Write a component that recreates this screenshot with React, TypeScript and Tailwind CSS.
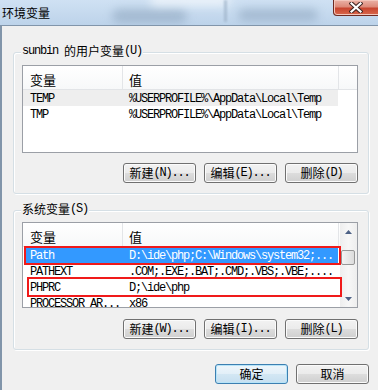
import type { ReactNode } from 'react';

const MONO = "font-['Liberation_Mono',monospace] text-[12px] tracking-[-1.2px]";
const CJK = "font-['Noto_Sans_CJK_SC',sans-serif]";

type RowKind = 'plain' | 'hover' | 'selected';

interface VarRow {
  name: string;
  value: string;
  kind?: RowKind;
}

const USER_VARS: VarRow[] = [
  { name: 'TEMP', value: '%USERPROFILE%\\AppData\\Local\\Temp', kind: 'hover' },
  { name: 'TMP', value: '%USERPROFILE%\\AppData\\Local\\Temp' },
];

const SYSTEM_VARS: VarRow[] = [
  { name: 'Path', value: 'D:\\ide\\php;C:\\Windows\\system32;...', kind: 'selected' },
  { name: 'PATHEXT', value: '.COM;.EXE;.BAT;.CMD;.VBS;.VBE;....' },
  { name: 'PHPRC', value: 'D;\\ide\\php' },
  { name: 'PROCESSOR_AR...', value: 'x86' },
];

function TitleBar() {
  return (
    <div className="relative h-[25px] overflow-hidden bg-gradient-to-b from-[#cfe1f3] to-[#bdd3ea]">
      {/* blurred aero glass behind the caption */}
      <div className="absolute left-[112px] top-[9px] h-[14px] w-[75px] rounded-full bg-[#8ea6bf] opacity-60 blur-[5px]" />
      <div className="absolute left-[150px] top-[-6px] h-[12px] w-[80px] rounded-full bg-white opacity-60 blur-[5px]" />
      <div className="absolute left-[224px] top-[0px] h-[22px] w-[3px] bg-[#9db2c8] opacity-70 blur-[1px]" />
      <div className="absolute left-[238px] top-[9px] h-[12px] w-[80px] rounded-full bg-[#8ea6bf] opacity-60 blur-[5px]" />
      <div className={`relative flex h-full items-center pl-[2px] text-[12px] text-black ${CJK}`}>环境变量</div>
      <div className="absolute right-[-4px] top-0 flex h-[16px] w-[49px] items-center justify-center rounded-b-[4px] border border-t-0 border-[#6d2a22] bg-[linear-gradient(#eab2a6_0%,#dd8a79_45%,#c8452f_55%,#d9684c_100%)] shadow-[inset_0_0_0_1px_#f3c6bb]">
        <svg width="14" height="11" viewBox="0 0 14 11" className="mr-[4px]">
          <path d="M2.5 1.5 L11.5 9.5 M11.5 1.5 L2.5 9.5" stroke="#3d2320" strokeWidth="4.2" strokeLinecap="square" />
          <path d="M2.5 1.5 L11.5 9.5 M11.5 1.5 L2.5 9.5" stroke="#ffffff" strokeWidth="2.2" strokeLinecap="square" />
        </svg>
      </div>
    </div>
  );
}

function ListHeader() {
  return (
    <div className={`flex h-[24px] shrink-0 border-b border-[#e2e4e7] bg-gradient-to-b from-white to-[#f7f8f9] text-[13px] leading-[15px] text-black ${CJK}`}>
      <div className="w-[100px] border-r border-[#e3e5e8] pl-[7px] pt-[6px]">变量</div>
      <div className="w-[216px] border-r border-[#e3e5e8] pl-[6px] pt-[6px]">值</div>
      <div className="flex-1" />
    </div>
  );
}

function Row({ row }: { row: VarRow }) {
  const kind = row.kind ?? 'plain';
  const rowCls =
    kind === 'selected'
      ? 'ml-[2px] w-[313px] bg-[#3399ff] text-white'
      : kind === 'hover'
        ? 'w-[315px] bg-[#eeeeee] text-black'
        : 'w-[315px] text-black';
  const nameCls = kind === 'selected' ? 'w-[98px] pl-[5px]' : 'w-[100px] pl-[7px]';
  return (
    <div className={`flex h-[16px] shrink-0 pt-[1px] leading-[16px] ${rowCls} ${MONO}`}>
      <div className={`overflow-hidden whitespace-nowrap ${nameCls}`}>{row.name}</div>
      <div className="whitespace-nowrap pl-[6px]">{row.value}</div>
    </div>
  );
}

function ScrollBar() {
  return (
    <div className="flex w-[17px] shrink-0 flex-col bg-gradient-to-r from-[#eeeeee] via-[#f7f7f7] to-[#eeeeee]">
      <div className="flex h-[17px] items-center justify-center">
        <svg width="7" height="4" viewBox="0 0 7 4">
          <path d="M3.5 0 L7 4 L0 4 Z" fill="#4d6185" />
        </svg>
      </div>
      <div className="mt-[10px] ml-[1px] h-[15px] w-[14px] rounded-[2px] border border-[#979797] bg-gradient-to-r from-[#f4f4f4] to-[#dcdcdc]" />
      <div className="flex-1" />
      <div className="flex h-[17px] items-center justify-center">
        <svg width="7" height="4" viewBox="0 0 7 4">
          <path d="M0 0 L7 0 L3.5 4 Z" fill="#4d6185" />
        </svg>
      </div>
    </div>
  );
}

function WinButton({ children, isDefault }: { children: ReactNode; isDefault?: boolean }) {
  const skin = isDefault
    ? 'border-[#3c7fb1] bg-[linear-gradient(#eef6fb_0%,#e2eff8_49%,#d3e7f4_50%,#c6dff0_100%)] shadow-[inset_0_0_0_1px_#b7e4f8]'
    : 'border-[#707070] bg-[linear-gradient(#f2f2f2_0%,#ebebeb_49%,#dddddd_50%,#cfcfcf_100%)] shadow-[inset_0_0_0_1px_#fbfbfb]';
  return (
    <div className={`flex h-[20px] w-[73px] items-center justify-center rounded-[3px] border text-[12px] leading-[14px] text-black ${skin}`}>
      {children}
    </div>
  );
}

function Label({ cn, key1, dots }: { cn: string; key1: string; dots?: boolean }) {
  return (
    <span className="flex items-center">
      <span className={CJK}>{cn}</span>
      <span className={`${MONO} text-[11px] tracking-[-0.8px]`}>({key1}){dots ? '...' : ''}</span>
    </span>
  );
}

function GroupBox({ title, children }: { title: ReactNode; children: ReactNode }) {
  return (
    <div className="relative w-[356px] rounded-[3px] border border-[#d5dfe5] pl-[8px] shadow-[inset_1px_1px_0_#ffffff,1px_1px_0_#ffffff]">
      <div className="absolute left-[7px] top-[-9px] flex h-[14px] items-center bg-[#f0f0f0] px-[1px] text-[12px] leading-[14px] text-black">
        {title}
      </div>
      {children}
    </div>
  );
}

export default function App() {
  return (
    <div className="flex h-[390px] w-[378px] flex-col overflow-hidden bg-[#f0f0f0]">
      <TitleBar />
      <div className="flex-1 border-l-2 border-t border-[#8195aa] pl-[11px]">
        {/* user variables */}
        <div className="mt-[26px]">
          <GroupBox
            title={
              <>
                <span className={MONO}>sunbin&nbsp;</span>
                <span className={CJK}>的用户变量</span>
                <span className={`${MONO} text-[11px] tracking-[-0.8px]`}>(U)</span>
              </>
            }
          >
            <div className="mt-[12px] flex h-[88px] w-[336px] flex-col overflow-hidden border border-[#9b9fa6] bg-white">
              <ListHeader />
              {USER_VARS.map((r) => (
                <Row key={r.name} row={r} />
              ))}
            </div>
            <div className="mb-[10px] mt-[10px] flex w-[336px] justify-end gap-[8px]">
              <WinButton><Label cn="新建" key1="N" dots /></WinButton>
              <WinButton><Label cn="编辑" key1="E" dots /></WinButton>
              <WinButton><Label cn="删除" key1="D" /></WinButton>
            </div>
          </GroupBox>
        </div>

        {/* system variables */}
        <div className="mt-[16px]">
          <GroupBox
            title={
              <>
                <span className={CJK}>系统变量</span>
                <span className={`${MONO} text-[11px] tracking-[-0.8px]`}>(S)</span>
              </>
            }
          >
            <div className="relative mt-[11px] flex h-[86px] w-[336px] overflow-hidden border border-[#9b9fa6] bg-white">
              <div className="flex w-[317px] flex-col">
                <ListHeader />
                {SYSTEM_VARS.map((r) => (
                  <Row key={r.name} row={r} />
                ))}
              </div>
              <ScrollBar />
              {/* red highlight marks */}
              <div className="absolute left-[1px] top-[23px] h-[19px] w-[317px] border-2 border-[#f01a1a]" />
              <div className="absolute left-[4px] top-[54px] h-[20px] w-[315px] border-2 border-[#f01a1a]" />
            </div>
            <div className="mb-[10px] mt-[11px] flex w-[336px] justify-end gap-[8px]">
              <WinButton><Label cn="新建" key1="W" dots /></WinButton>
              <WinButton><Label cn="编辑" key1="I" dots /></WinButton>
              <WinButton><Label cn="删除" key1="L" /></WinButton>
            </div>
          </GroupBox>
        </div>

        <div className={`mt-[14px] flex w-[356px] justify-end gap-[8px] ${CJK}`}>
          <WinButton isDefault>确定</WinButton>
          <WinButton>取消</WinButton>
        </div>
      </div>
    </div>
  );
}
